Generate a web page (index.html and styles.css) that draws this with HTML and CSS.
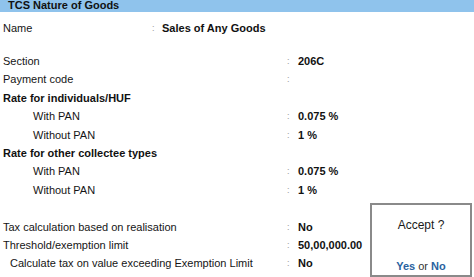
FILE: index.html
```html
<!DOCTYPE html>
<html lang="en">
<head>
    <meta charset="UTF-8">
    <title>TCS Nature of Goods</title>
    <link rel="stylesheet" href="styles.css">
</head>
<body>
    <div class="screen">
        <div class="title-bar">TCS Nature of Goods</div>

        <div class="name-row">
            <div class="label">Name</div>
            <div class="colon">:</div>
            <div class="value">Sales of Any Goods</div>
        </div>

        <div class="fields">
            <div class="label">Section</div>
            <div class="colon">:</div>
            <div class="value">206C</div>

            <div class="label">Payment code</div>
            <div class="colon">:</div>
            <div class="value"></div>

            <div class="label heading">Rate for individuals/HUF</div>
            <div class="colon"></div>
            <div class="value"></div>

            <div class="label sub">With PAN</div>
            <div class="colon">:</div>
            <div class="value">0.075 %</div>

            <div class="label sub">Without PAN</div>
            <div class="colon">:</div>
            <div class="value">1 %</div>

            <div class="label heading">Rate for other collectee types</div>
            <div class="colon"></div>
            <div class="value"></div>

            <div class="label sub">With PAN</div>
            <div class="colon">:</div>
            <div class="value">0.075 %</div>

            <div class="label sub">Without PAN</div>
            <div class="colon">:</div>
            <div class="value">1 %</div>

            <div class="label blank"></div>
            <div class="colon"></div>
            <div class="value"></div>

            <div class="label">Tax calculation based on realisation</div>
            <div class="colon">:</div>
            <div class="value">No</div>

            <div class="label">Threshold/exemption limit</div>
            <div class="colon">:</div>
            <div class="value">50,00,000.00</div>

            <div class="label small-indent">Calculate tax on value exceeding Exemption Limit</div>
            <div class="colon">:</div>
            <div class="value">No</div>
        </div>

        <div class="accept-box">
            <div class="accept-title">Accept ?</div>
            <div class="accept-options">
                <span class="opt">Yes</span> or <span class="opt">No</span>
            </div>
        </div>
    </div>
</body>
</html>
```

FILE: styles.css
```css
* {
    margin: 0;
    padding: 0;
    box-sizing: border-box;
}

body {
    font-family: 'Liberation Sans', Arial, sans-serif;
    font-size: 11px;
    color: #151515;
    background-color: #fff;
}

.screen {
    position: relative;
    width: 474px;
    height: 277px;
    overflow: hidden;
}

.title-bar {
    height: 12px;
    line-height: 11px;
    padding-left: 8px;
    background-color: #8fc3ec;
    font-weight: bold;
    color: #111;
    overflow: hidden;
}

.name-row {
    display: grid;
    grid-template-columns: 149px 10px auto;
    padding-left: 3px;
    margin-top: 7px;
    line-height: 18.4px;
}

.fields {
    display: grid;
    grid-template-columns: 284px 11px auto;
    grid-auto-rows: 18.4px;
    padding-left: 3px;
    margin-top: 14.6px;
    line-height: 18.4px;
}

.label {
    white-space: nowrap;
}

.heading {
    font-weight: bold;
    color: #111;
}

.sub {
    padding-left: 30px;
}

.small-indent {
    padding-left: 7px;
}

.colon {
    color: #9a9a9a;
    font-size: 9px;
}

.value {
    font-weight: bold;
    color: #111;
}

.accept-box {
    position: absolute;
    left: 370px;
    top: 203px;
    width: 102px;
    height: 74px;
    border: 2px solid #8a8a8a;
    background-color: #fff;
    text-align: center;
    padding-top: 13px;
}

.accept-title {
    font-size: 12px;
    line-height: 14px;
    color: #1a1a1a;
}

.accept-options {
    margin-top: 27px;
    line-height: 14px;
    color: #333;
}

.opt {
    font-weight: bold;
    color: #2a62a0;
}
```
